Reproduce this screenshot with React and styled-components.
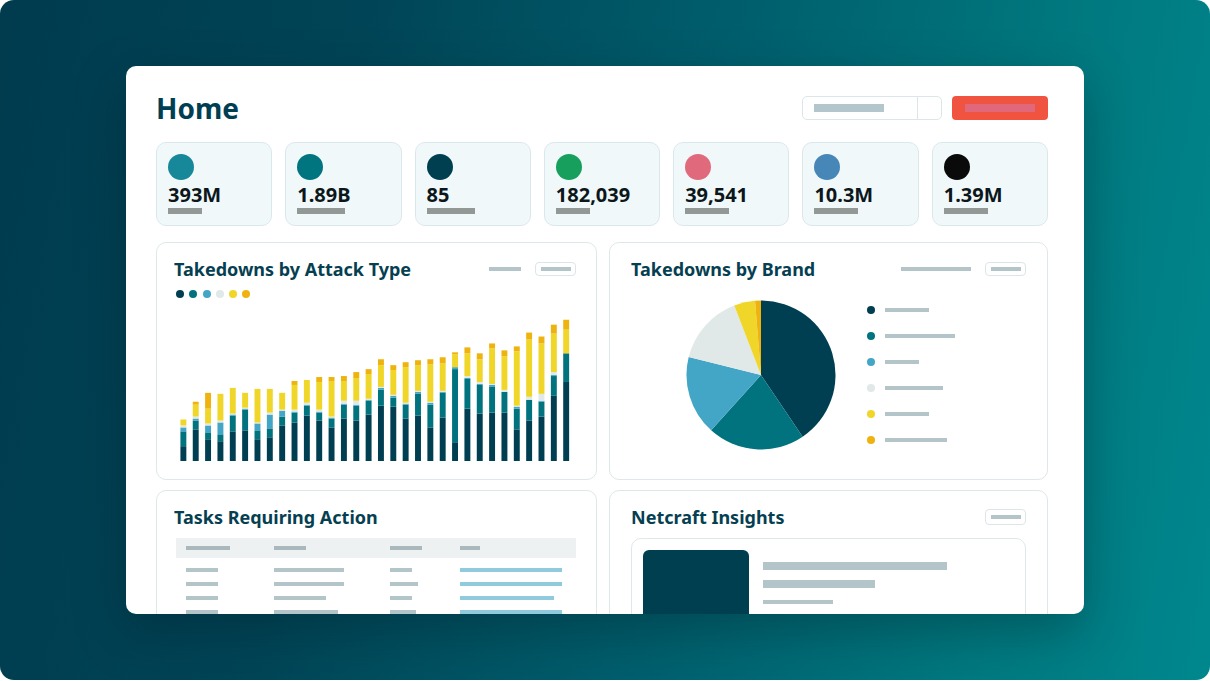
import React from "react";
import styled, { createGlobalStyle } from "styled-components";

const GlobalStyle = createGlobalStyle`
  body {
    margin: 0;
    background: #ffffff;
    font-family: "Noto Sans", "Open Sans", sans-serif;
  }
`;

const Frame = styled.div`
  width: 1210px;
  height: 680px;
  box-sizing: border-box;
  padding: 66px 126px 0;
  border-radius: 14px;
  overflow: hidden;
  background: linear-gradient(100deg, #003b4e 0%, #004557 28%, #00606e 58%, #00797f 82%, #00878e 100%);
`;

const Board = styled.div`
  height: 548px;
  box-sizing: border-box;
  padding: 30px 36px 0 30px;
  background: #ffffff;
  border-radius: 10px;
  overflow: hidden;
  box-shadow: 0 18px 50px rgba(0, 28, 38, 0.35);
`;

const Header = styled.div`
  display: flex;
  justify-content: space-between;
  align-items: center;
  height: 24px;
`;

const Title = styled.h1`
  margin: 0;
  font-size: 28px;
  line-height: 24px;
  font-weight: 700;
  color: #003e51;
`;

const Controls = styled.div`
  display: flex;
  gap: 10px;
`;

const Select = styled.div`
  display: flex;
  width: 140px;
  height: 24px;
  box-sizing: border-box;
  border: 1px solid #dce6e8;
  border-radius: 5px;
`;

const SelectField = styled.div`
  flex: 1;
  display: flex;
  align-items: center;
  padding-left: 11px;
  border-right: 1px solid #dce6e8;
`;

const Caret = styled.div`
  width: 23px;
`;

const RedButton = styled.div`
  display: flex;
  align-items: center;
  justify-content: center;
  width: 96px;
  height: 24px;
  background: #f05441;
  border-radius: 4px;
`;

const Rule = styled.div`
  width: ${(p) => p.$w}px;
  height: ${(p) => p.$h || 4}px;
  background: ${(p) => p.$c || "#b4c5ca"};
  flex-shrink: 0;
`;

const StatRow = styled.div`
  display: grid;
  grid-template-columns: repeat(7, 1fr);
  gap: 13px;
  margin-top: 22px;
`;

const StatCard = styled.div`
  height: 84px;
  box-sizing: border-box;
  padding: 11px;
  background: #f1f8fa;
  border: 1px solid #dbe8eb;
  border-radius: 10px;
`;

const Dot = styled.div`
  width: ${(p) => p.$size}px;
  height: ${(p) => p.$size}px;
  border-radius: 50%;
  background: ${(p) => p.$color};
  flex-shrink: 0;
`;

const Value = styled.div`
  margin-top: 4px;
  font-size: 20px;
  line-height: 22px;
  font-weight: 700;
  color: #0c171b;
`;

const ValueBar = styled.div`
  margin-top: 2px;
  width: ${(p) => p.$w}px;
  height: 6px;
  background: #919896;
`;

const Panels = styled.div`
  display: grid;
  grid-template-columns: 1fr 1fr;
  grid-template-rows: 238px 160px;
  column-gap: 12px;
  row-gap: 10px;
  margin-top: 16px;
`;

const Panel = styled.div`
  display: flex;
  flex-direction: column;
  box-sizing: border-box;
  padding: 15px ${(p) => p.$right}px 0 ${(p) => p.$left}px;
  background: #ffffff;
  border: 1px solid #dee7e9;
  border-radius: 10px;
`;

const PanelHeader = styled.div`
  display: flex;
  justify-content: space-between;
  align-items: center;
  height: 22px;
`;

const PanelTitle = styled.h2`
  margin: 0;
  font-size: 18px;
  line-height: 22px;
  font-weight: 700;
  color: #063f51;
`;

const Tools = styled.div`
  display: flex;
  align-items: center;
  gap: 14px;
`;

const Chip = styled.div`
  display: flex;
  align-items: center;
  justify-content: center;
  width: 41px;
  height: ${(p) => p.$h || 14}px;
  box-sizing: border-box;
  border: 1.5px solid #dce5e8;
  border-radius: 4px;
`;

const LegendDots = styled.div`
  display: flex;
  gap: 5.3px;
  margin: 10px 0 0 2px;
`;

const Chart = styled.svg`
  display: block;
  margin: auto 0 18px 4px;
`;

const BrandBody = styled.div`
  display: flex;
  margin-top: 20px;
`;

const Pie = styled.svg`
  display: block;
  margin-left: 55px;
`;

const Legend = styled.div`
  display: flex;
  flex-direction: column;
  gap: 18px;
  margin-left: 31px;
  padding-top: 6px;
`;

const LegendRow = styled.div`
  display: flex;
  align-items: center;
  gap: 10px;
  height: 8px;
`;

const Table = styled.div`
  width: 400px;
  margin: 10px 0 0 2px;
`;

const TableGrid = styled.div`
  display: grid;
  grid-template-columns: 88px 116px 70px 1fr;
  align-items: center;
  padding-left: 10px;
  height: ${(p) => p.$h}px;
  background: ${(p) => p.$bg || "transparent"};
`;

const TableBody = styled.div`
  padding-top: 5px;
`;

const InnerCard = styled.div`
  display: flex;
  gap: 14px;
  height: 200px;
  margin-top: 10px;
  box-sizing: border-box;
  padding: 11px;
  border: 1px solid #dfe7ea;
  border-radius: 10px;
`;

const Thumb = styled.div`
  width: 106px;
  height: 120px;
  border-radius: 6px;
  background: #003f50;
`;

const Lines = styled.div`
  display: flex;
  flex-direction: column;
  padding-top: 12px;
  gap: ${(p) => p.$gap}px;
`;

const C = {
  dark: "#003f52",
  teal: "#00737f",
  blue: "#43a6c6",
  gray: "#e1e8e8",
  yellow: "#efd628",
  orange: "#efb30f",
};
const ORDER = ["dark", "teal", "blue", "gray", "yellow", "orange"];

const stats = [
  { color: "#17879a", value: "393M", bar: 34 },
  { color: "#00747f", value: "1.89B", bar: 48 },
  { color: "#003f50", value: "85", bar: 48 },
  { color: "#17a05d", value: "182,039", bar: 34 },
  { color: "#e06a7c", value: "39,541", bar: 44 },
  { color: "#4787b8", value: "10.3M", bar: 44 },
  { color: "#0a0a0a", value: "1.39M", bar: 44 },
];

// dark, teal, blue, gray, yellow, orange
const bars = [
  [15, 15, 4, 2, 6, 0],
  [32, 9, 2, 2, 12, 3],
  [22, 7, 7, 2, 15, 16],
  [20, 7, 12, 2, 27, 0],
  [30, 16, 1, 1, 26, 0],
  [31, 21, 1, 1, 15, 0],
  [22, 9, 7, 1, 34, 0],
  [24, 9, 14, 2, 24, 0],
  [36, 9, 6, 1, 17, 0],
  [39, 10, 1, 2, 25, 4],
  [46, 10, 1, 2, 23, 0],
  [41, 8, 1, 2, 28, 5],
  [34, 9, 1, 1, 36, 4],
  [43, 14, 1, 3, 20, 5],
  [41, 15, 1, 4, 23, 6],
  [47, 14, 1, 1, 25, 5],
  [56, 16, 2, 1, 22, 6],
  [55, 9, 2, 1, 25, 5],
  [43, 14, 1, 1, 36, 5],
  [46, 22, 2, 1, 26, 5],
  [34, 23, 2, 1, 38, 5],
  [44, 25, 1, 1, 28, 6],
  [19, 74, 2, 0, 13, 2],
  [53, 30, 1, 2, 23, 6],
  [48, 29, 1, 2, 23, 6],
  [49, 26, 2, 1, 36, 5],
  [49, 21, 0, 2, 34, 6],
  [32, 21, 2, 1, 55, 5],
  [41, 21, 0, 3, 58, 7],
  [45, 15, 1, 7, 51, 7],
  [66, 20, 1, 3, 39, 9],
  [80, 29, 0, 0, 24, 10],
];

const slices = [
  [0, 146, "dark"],
  [146, 222, "teal"],
  [222, 284, "blue"],
  [284, 339, "gray"],
  [339, 355.4, "yellow"],
  [355.4, 360, "orange"],
];

const legendBars = [44, 70, 34, 58, 44, 62];

const taskRows = [
  [32, 70, 22, 102],
  [32, 70, 28, 102],
  [32, 52, 22, 94],
  [32, 64, 26, 102],
];

const CHART_H = 165;

function BarChart() {
  return (
    <Chart width="398" height={CHART_H} viewBox={`0 0 398 ${CHART_H}`}>
      {bars.map((b, i) => {
        let y = CHART_H;
        return b.map((h, k) => {
          if (!h) return null;
          y -= h;
          return <rect key={`${i}-${k}`} x={i * 12.5} y={y} width="6" height={h} fill={C[ORDER[k]]} />;
        });
      })}
    </Chart>
  );
}

function pt(deg, r) {
  const a = (deg * Math.PI) / 180;
  return [75 + r * Math.sin(a), 75 - r * Math.cos(a)];
}

function PieChart() {
  const r = 74.5;
  return (
    <Pie width="150" height="150" viewBox="0 0 150 150">
      {slices.map(([a, b, key]) => {
        const [x1, y1] = pt(a, r);
        const [x2, y2] = pt(b, r);
        const large = b - a > 180 ? 1 : 0;
        return <path key={key} d={`M75 75 L${x1} ${y1} A${r} ${r} 0 ${large} 1 ${x2} ${y2} Z`} fill={C[key]} />;
      })}
    </Pie>
  );
}

export default function App() {
  return (
    <>
      <GlobalStyle />
      <Frame>
        <Board>
          <Header>
            <Title>Home</Title>
            <Controls>
              <Select>
                <SelectField>
                  <Rule $w={70} $h={8} $c="#b3c6cb" />
                </SelectField>
                <Caret />
              </Select>
              <RedButton>
                <Rule $w={70} $h={8} $c="#e0687a" />
              </RedButton>
            </Controls>
          </Header>

          <StatRow>
            {stats.map((s) => (
              <StatCard key={s.value}>
                <Dot $size={26} $color={s.color} />
                <Value>{s.value}</Value>
                <ValueBar $w={s.bar} />
              </StatCard>
            ))}
          </StatRow>

          <Panels>
            <Panel $left={17} $right={20}>
              <PanelHeader>
                <PanelTitle>Takedowns by Attack Type</PanelTitle>
                <Tools>
                  <Rule $w={32} />
                  <Chip>
                    <Rule $w={30} />
                  </Chip>
                </Tools>
              </PanelHeader>
              <LegendDots>
                {ORDER.map((k) => (
                  <Dot key={k} $size={8} $color={C[k]} />
                ))}
              </LegendDots>
              <BarChart />
            </Panel>

            <Panel $left={21} $right={21}>
              <PanelHeader>
                <PanelTitle>Takedowns by Brand</PanelTitle>
                <Tools>
                  <Rule $w={70} />
                  <Chip>
                    <Rule $w={30} />
                  </Chip>
                </Tools>
              </PanelHeader>
              <BrandBody>
                <PieChart />
                <Legend>
                  {ORDER.map((k, i) => (
                    <LegendRow key={k}>
                      <Dot $size={8} $color={C[k]} />
                      <Rule $w={legendBars[i]} />
                    </LegendRow>
                  ))}
                </Legend>
              </BrandBody>
            </Panel>

            <Panel $left={17} $right={20}>
              <PanelHeader>
                <PanelTitle>Tasks Requiring Action</PanelTitle>
              </PanelHeader>
              <Table>
                <TableGrid $h={20} $bg="#edf1f2">
                  <Rule $w={44} $c="#a9b8bc" />
                  <Rule $w={32} $c="#a9b8bc" />
                  <Rule $w={32} $c="#a9b8bc" />
                  <Rule $w={20} $c="#a9b8bc" />
                </TableGrid>
                <TableBody>
                  {taskRows.map((row, i) => (
                    <TableGrid key={i} $h={14}>
                      <Rule $w={row[0]} />
                      <Rule $w={row[1]} />
                      <Rule $w={row[2]} />
                      <Rule $w={row[3]} $c="#8fcbdd" />
                    </TableGrid>
                  ))}
                </TableBody>
              </Table>
            </Panel>

            <Panel $left={21} $right={21}>
              <PanelHeader>
                <PanelTitle>Netcraft Insights</PanelTitle>
                <Chip $h={16}>
                  <Rule $w={30} />
                </Chip>
              </PanelHeader>
              <InnerCard>
                <Thumb />
                <Lines $gap={10}>
                  <Rule $w={184} $h={8} />
                  <Rule $w={112} $h={8} />
                  <Rule $w={70} $h={4} style={{ marginTop: 2 }} />
                </Lines>
              </InnerCard>
            </Panel>
          </Panels>
        </Board>
      </Frame>
    </>
  );
}
